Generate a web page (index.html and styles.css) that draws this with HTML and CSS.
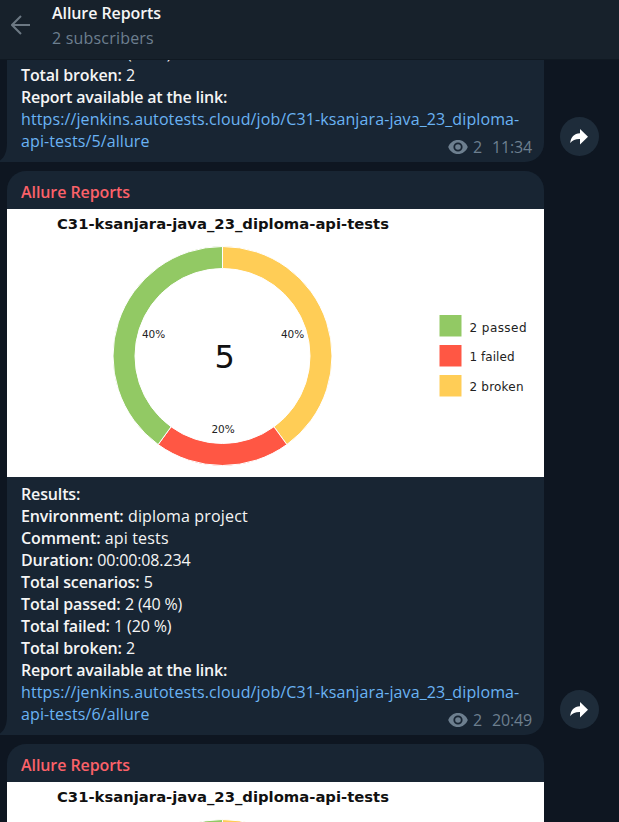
FILE: index.html
```html
<!DOCTYPE html>
<html lang="en">
<head>
<meta charset="utf-8">
<title>Allure Reports</title>
<link rel="stylesheet" href="styles.css">
</head>
<body>
<svg class="defs" aria-hidden="true">
  <symbol id="eye" viewBox="0 0 20 14"><path fill-rule="evenodd" d="M10 0C5.500 0 1.800 2.700.2 7c1.600 4.300 5.300 7 9.800 7s8.200-2.700 9.800-7C18.200 2.700 14.500 0 10 0zm0 11.600a4.600 4.600 0 1 1 0-9.200 4.600 4.600 0 0 1 0 9.200zm0-1.800a2.800 2.800 0 1 0 0-5.600 2.800 2.800 0 0 0 0 5.600z"/></symbol>
  <symbol id="share" viewBox="0 0 18 16"><path d="M10 0v4.300C4 4.600.8 8.200.2 14c2.300-2.800 5.300-4 9.800-3.900V15.500L18 7.800z"/></symbol>
  <symbol id="tail" viewBox="0 0 7 20"><path d="M7 0C7 9 5 15 0 18.500V20h7z"/></symbol>
  <symbol id="ring" viewBox="0 0 537 268">
    <g stroke="#fff" stroke-width="1">
      <path fill="#ffcd56" d="M215.500 37.500A109.500 109.500 0 0 1 279.860 235.590L266.930 217.790A87.500 87.500 0 0 0 215.500 59.500z"/>
      <path fill="#ff5744" d="M279.860 235.590A109.500 109.500 0 0 1 151.140 235.590L164.070 217.790A87.500 87.500 0 0 0 266.930 217.790z"/>
      <path fill="#92c964" d="M151.140 235.590A109.500 109.500 0 0 1 215.500 37.500V59.500A87.500 87.500 0 0 0 164.070 217.790z"/>
    </g>
    <path fill="#92c964" d="M432.500 106h22v21.500h-22z"/>
    <path fill="#ff5744" d="M432.500 136h22v21.500h-22z"/>
    <path fill="#ffcd56" d="M432.500 166h22v21.500h-22z"/>
  </symbol>
</svg>

<header class="topbar">
  <svg class="back" viewBox="0 0 20 20"><path d="M19 10H1.500M10 1L1 10l9 9"/></svg>
  <div>
    <h1 class="title">Allure Reports</h1>
    <p class="subscribers">2 subscribers</p>
  </div>
</header>

<main class="feed">
  <div class="row row-clipped">
    <article class="bubble">
      <div class="body">
        <p><b>Total failed:</b> <span class="num">1 (20 %)</span></p>
        <p><b>Total broken:</b> 2</p>
        <p><b class="tight">Report available at the link:</b></p>
        <p class="link">https://jenkins.autotests.cloud/job/C31-ksanjara-java_23_diploma-<br>api-tests/5/allure</p>
      </div>
      <div class="meta"><svg class="eye"><use href="#eye"/></svg><span>2</span><time>11:34</time></div>
      <svg class="tail"><use href="#tail"/></svg>
    </article>
    <button class="share" aria-label="Share"><svg><use href="#share"/></svg></button>
  </div>

  <div class="row">
    <article class="bubble">
      <h2 class="sender">Allure Reports</h2>
      <svg class="chart" viewBox="0 0 537 268">
        <use href="#ring"/>
        <text class="chart-title" x="50" y="20" textLength="332" lengthAdjust="spacingAndGlyphs">C31-ksanjara-java_23_diploma-api-tests</text>
        <g class="chart-percent">
          <text x="135" y="128.500">40%</text>
          <text x="274" y="128.500">40%</text>
          <text x="204.500" y="224">20%</text>
        </g>
        <text class="chart-total" x="207.500" y="159">5</text>
        <g class="chart-legend">
          <text x="462.500" y="123" textLength="57">2 passed</text>
          <text x="462.500" y="152" textLength="45">1 failed</text>
          <text x="462.500" y="182" textLength="54">2 broken</text>
        </g>
      </svg>
      <div class="body">
        <p><b>Results:</b></p>
        <p><b>Environment:</b> diploma project</p>
        <p><b>Comment:</b> api tests</p>
        <p><b>Duration:</b> <span class="num">00:00:08.234</span></p>
        <p><b>Total scenarios:</b> 5</p>
        <p><b>Total passed:</b> <span class="num">2 (40 %)</span></p>
        <p><b>Total failed:</b> <span class="num">1 (20 %)</span></p>
        <p><b>Total broken:</b> 2</p>
        <p><b class="tight">Report available at the link:</b></p>
        <p class="link">https://jenkins.autotests.cloud/job/C31-ksanjara-java_23_diploma-<br>api-tests/6/allure</p>
      </div>
      <div class="meta"><svg class="eye"><use href="#eye"/></svg><span>2</span><time>20:49</time></div>
      <svg class="tail"><use href="#tail"/></svg>
    </article>
    <button class="share" aria-label="Share"><svg><use href="#share"/></svg></button>
  </div>

  <div class="row">
    <article class="bubble">
      <h2 class="sender">Allure Reports</h2>
      <svg class="chart" viewBox="0 0 537 268">
        <use href="#ring"/>
        <text class="chart-title" x="50" y="20" textLength="332" lengthAdjust="spacingAndGlyphs">C31-ksanjara-java_23_diploma-api-tests</text>
      </svg>
    </article>
  </div>
</main>
</body>
</html>
```

FILE: styles.css
```css
* { box-sizing: border-box; margin: 0; padding: 0; }

body {
  display: flex;
  flex-direction: column;
  height: 822px;
  overflow: hidden;
  background: #0e1621;
  color: #f5f5f5;
  font: 16px/22px "Open Sans", "Noto Sans", sans-serif;
}

.defs { position: absolute; width: 0; height: 0; }

.topbar {
  display: flex;
  flex: none;
  align-items: flex-start;
  gap: 21px;
  height: 60px;
  padding: 2px 11px 0;
  background: #17212b;
  border-bottom: 1px solid #101922;
}
.back {
  width: 20px;
  height: 20px;
  margin-top: 13px;
  fill: none;
  stroke: #6c7883;
  stroke-width: 2;
}
.title { font-size: 16px; font-weight: 600; line-height: 22px; letter-spacing: -0.08px; }
.subscribers { margin-top: 3px; color: #6d7f8f; letter-spacing: 0.2px; }

.feed {
  display: flex;
  flex: 1;
  flex-direction: column;
  gap: 9px;
  min-height: 0;
  overflow: hidden;
}
.row {
  display: flex;
  flex: none;
  align-items: flex-end;
  gap: 16px;
  padding-left: 7px;
}
.row-clipped { margin-top: -24px; }

.bubble {
  position: relative;
  width: 537px;
  background: #182533;
  border-radius: 19px 19px 19px 0;
}
.sender {
  height: 38px;
  padding: 10px 14px 0;
  color: #fb6169;
  font-size: 16px;
  font-weight: 600;
  line-height: 22px;
  letter-spacing: -0.08px;
}
.chart { display: block; width: 537px; height: 268px; background: #fff; }
.body { padding: 6px 14px 10px; letter-spacing: 0.16px; }
.body b { font-weight: 600; letter-spacing: -0.14px; }
.body b.tight { letter-spacing: -0.2px; }
.num { letter-spacing: -0.15px; }
.link { color: #6ab3f3; white-space: nowrap; letter-spacing: 0.105px; }

.meta {
  position: absolute;
  right: 12px;
  bottom: 4px;
  display: flex;
  align-items: center;
  color: #6d7f8f;
  letter-spacing: -0.15px;
}
.eye { width: 20px; height: 14px; margin-right: 5px; fill: currentColor; }
.meta time { margin-left: 10px; }
.tail {
  position: absolute;
  left: -7px;
  bottom: 0;
  width: 7px;
  height: 20px;
  fill: #182533;
}

.share {
  display: grid;
  place-items: center;
  width: 39px;
  height: 39px;
  margin-bottom: 6px;
  border: 0;
  border-radius: 50%;
  background: #1e2c3a;
}
.share svg { width: 18px; height: 16px; margin-right: 1px; fill: #fff; }

.chart-title { font: bold 14px "DejaVu Sans", sans-serif; fill: #111; }
.chart-percent { font: 10.500px "DejaVu Sans", sans-serif; letter-spacing: -0.1px; fill: #222; }
.chart-total { font: 32px "DejaVu Sans", sans-serif; fill: #111; }
.chart-legend { font: 12px "DejaVu Sans", sans-serif; fill: #222; }
```
